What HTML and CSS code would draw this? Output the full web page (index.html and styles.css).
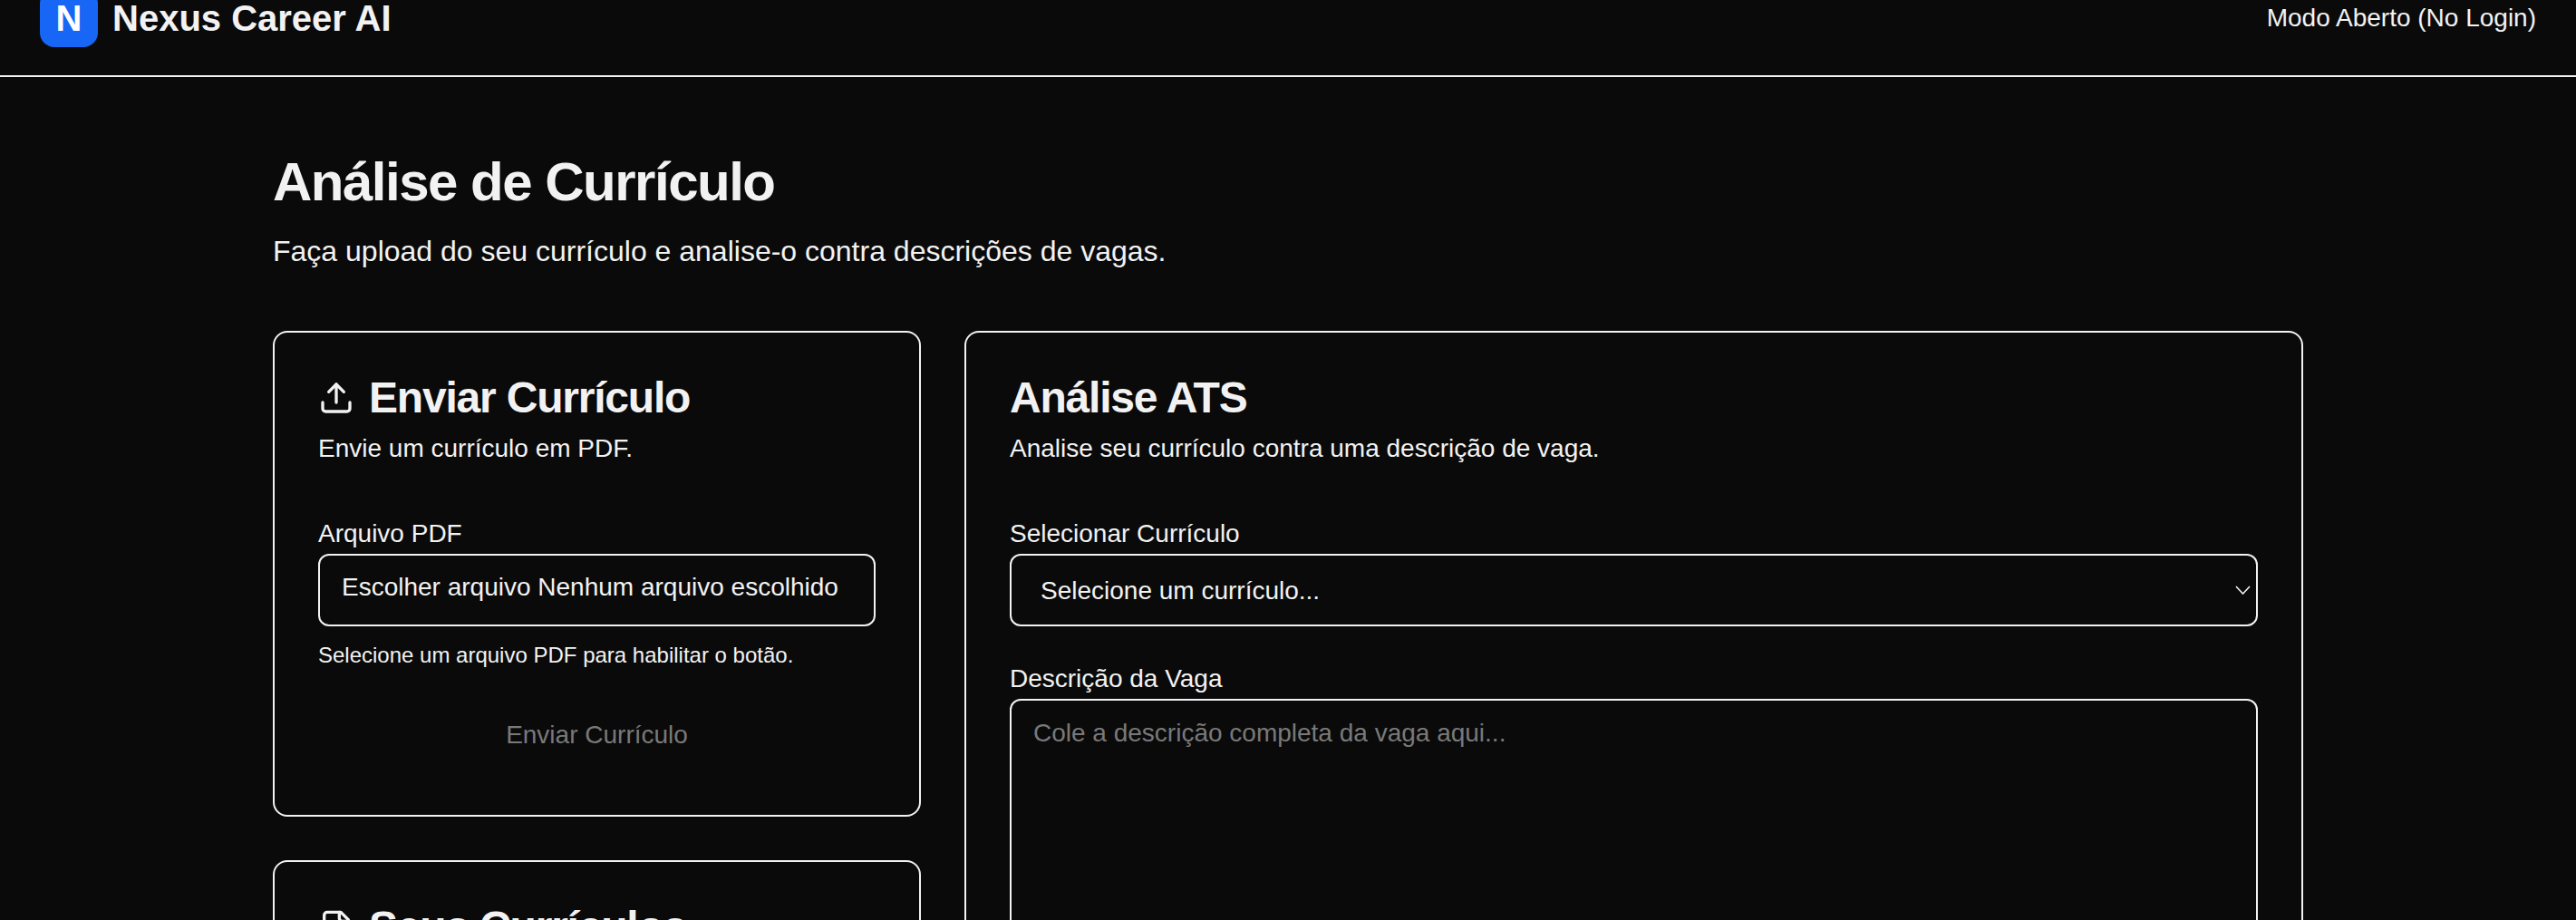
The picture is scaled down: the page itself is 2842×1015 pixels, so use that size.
FILE: index.html
```html
<!DOCTYPE html>
<html lang="pt-BR">
<head>
    <meta charset="UTF-8">
    <meta name="viewport" content="width=device-width, initial-scale=1.0">
    <title>Nexus Career AI</title>
    <link rel="stylesheet" href="styles.css">
</head>
<body>
    <header class="topbar">
        <div class="brand">
            <div class="brand-logo">N</div>
            <span class="brand-name">Nexus Career AI</span>
        </div>
        <span class="mode-label">Modo Aberto (No Login)</span>
    </header>

    <main class="page">
        <h1 class="page-title">Análise de Currículo</h1>
        <p class="page-subtitle">Faça upload do seu currículo e analise-o contra descrições de vagas.</p>

        <div class="columns">
            <div class="side-column">
                <section class="card">
                    <h2 class="card-title">
                        <svg class="card-icon" viewBox="0 0 24 24" fill="none" stroke="currentColor" stroke-width="2" stroke-linecap="round" stroke-linejoin="round">
                            <path d="M21 15v4a2 2 0 0 1-2 2H5a2 2 0 0 1-2-2v-4"/>
                            <path d="M17 8l-5-5-5 5"/>
                            <path d="M12 3v12"/>
                        </svg>
                        Enviar Currículo
                    </h2>
                    <p class="card-desc">Envie um currículo em PDF.</p>

                    <div class="field">
                        <label class="field-label">Arquivo PDF</label>
                        <div class="file-box">Escolher arquivo Nenhum arquivo escolhido</div>
                        <p class="field-hint">Selecione um arquivo PDF para habilitar o botão.</p>
                    </div>

                    <button class="submit-btn" type="button" disabled>Enviar Currículo</button>
                </section>

                <section class="card">
                    <h2 class="card-title">
                        <svg class="card-icon" viewBox="0 0 24 24" fill="none" stroke="currentColor" stroke-width="2" stroke-linecap="round" stroke-linejoin="round">
                            <path d="M15 2H6a2 2 0 0 0-2 2v16a2 2 0 0 0 2 2h12a2 2 0 0 0 2-2V7z"/>
                            <path d="M14 2v4a2 2 0 0 0 2 2h4"/>
                        </svg>
                        Seus Currículos
                    </h2>
                </section>
            </div>

            <section class="card main-card">
                <h2 class="card-title">Análise ATS</h2>
                <p class="card-desc">Analise seu currículo contra uma descrição de vaga.</p>

                <div class="field">
                    <label class="field-label" for="resume">Selecionar Currículo</label>
                    <div class="select-wrap">
                        <select class="select-box" id="resume">
                            <option>Selecione um currículo...</option>
                        </select>
                        <svg class="select-arrow" viewBox="0 0 17 10" fill="none" stroke="currentColor" stroke-width="1.6">
                            <path d="M1 1l7.5 8L16 1"/>
                        </svg>
                    </div>
                </div>

                <div class="field field-job">
                    <label class="field-label" for="job">Descrição da Vaga</label>
                    <textarea class="text-box" id="job" placeholder="Cole a descrição completa da vaga aqui..."></textarea>
                </div>
            </section>
        </div>
    </main>
</body>
</html>
```

FILE: styles.css
```css
html, body {
    height: 1015px;
    overflow: hidden;
}
body {
    margin: 0;
    background-color: #0a0a0a;
    color: #f2f2f2;
    font-family: "Liberation Sans", Arial, sans-serif;
}
.topbar {
    height: 83px;
    border-bottom: 2px solid #f2f2f2;
    padding: 0 44px;
    display: flex;
    justify-content: space-between;
    align-items: flex-start;
}
.brand {
    margin-top: -12px;
    display: flex;
    align-items: center;
    gap: 16px;
}
.brand-logo {
    width: 64px;
    height: 64px;
    border-radius: 16px;
    background-color: #1766f5;
    color: #ffffff;
    font-size: 40px;
    font-weight: bold;
    display: flex;
    align-items: center;
    justify-content: center;
}
.brand-name {
    font-size: 40px;
    font-weight: bold;
}
.mode-label {
    font-size: 28px;
    line-height: 40px;
}
.page {
    padding: 80px 301px 0;
}
.page-title {
    margin: 0;
    font-size: 60px;
    line-height: 72px;
    font-weight: bold;
    letter-spacing: -1.5px;
}
.page-subtitle {
    margin: 16px 0 0;
    font-size: 32px;
    line-height: 48px;
}
.columns {
    margin-top: 64px;
    display: grid;
    grid-template-columns: 715px 1fr;
    gap: 48px;
    align-items: start;
}
.side-column {
    display: flex;
    flex-direction: column;
    gap: 48px;
}
.card {
    border: 2px solid #f2f2f2;
    border-radius: 16px;
    padding: 48px;
}
.main-card {
    height: 900px;
}
.card-title {
    margin: 0;
    font-size: 48px;
    line-height: 48px;
    font-weight: bold;
    letter-spacing: -1.2px;
    display: flex;
    align-items: center;
    gap: 16px;
}
.card-icon {
    width: 40px;
    height: 40px;
    flex-shrink: 0;
}
.card-desc {
    margin: 12px 0 0;
    font-size: 28px;
    line-height: 40px;
}
.field {
    margin-top: 60px;
}
.field-job {
    margin-top: 44px;
}
.field-label {
    display: block;
    font-size: 28px;
    line-height: 28px;
    margin-bottom: 8px;
}
.file-box {
    height: 76px;
    border: 2px solid #f2f2f2;
    border-radius: 12px;
    padding: 0 24px;
    font-size: 28px;
    line-height: 70px;
    white-space: nowrap;
    overflow: hidden;
}
.field-hint {
    margin: 16px 0 0;
    font-size: 24px;
    line-height: 32px;
}
.submit-btn {
    display: block;
    width: 100%;
    height: 80px;
    margin-top: 32px;
    padding: 0;
    border: none;
    background: none;
    color: #797979;
    font-family: inherit;
    font-size: 28px;
}
.select-wrap {
    position: relative;
}
.select-box {
    display: block;
    width: 100%;
    height: 80px;
    border: 2px solid #f2f2f2;
    border-radius: 12px;
    padding: 0 32px;
    appearance: none;
    background: none;
    color: #f2f2f2;
    font-family: inherit;
    font-size: 28px;
}
.select-arrow {
    position: absolute;
    top: 35px;
    right: 8px;
    width: 17px;
    height: 10px;
}
.text-box {
    display: block;
    box-sizing: border-box;
    width: 100%;
    height: 400px;
    border: 2px solid #f2f2f2;
    border-radius: 12px;
    padding: 18px 24px;
    background: none;
    color: #f2f2f2;
    font-family: inherit;
    font-size: 28px;
    line-height: 36px;
    resize: none;
}
.text-box::placeholder {
    color: #797979;
}
```
